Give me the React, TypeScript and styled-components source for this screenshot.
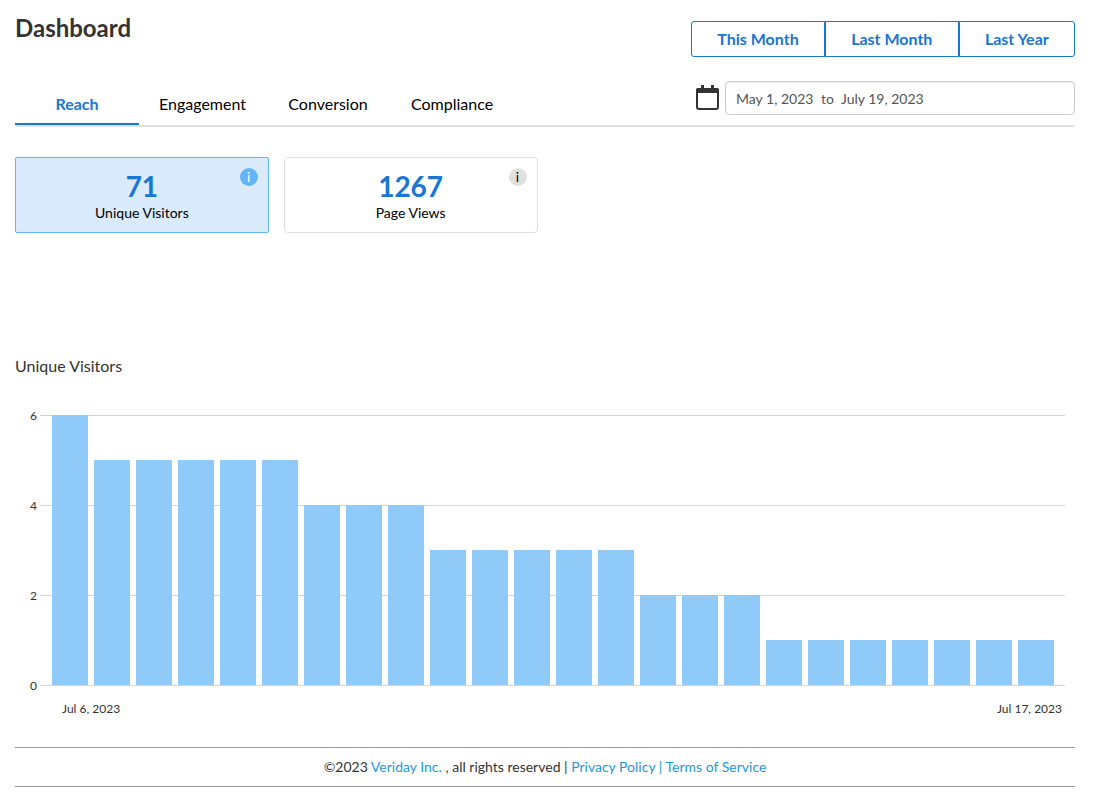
import React, { useState } from "react";
import styled, { createGlobalStyle } from "styled-components";

const GlobalStyle = createGlobalStyle`
  *, *::before, *::after { box-sizing: border-box; }
  body {
    margin: 0;
    background: #fff;
    color: #333;
    font-family: Lato, "Liberation Sans", sans-serif;
    font-size: 14px;
    line-height: 20px;
  }
  button, input { font: inherit; }
`;

const Page = styled.main`
  padding: 0 19px 0 15px;
`;

const Header = styled.header`
  display: flex;
  justify-content: space-between;
  border-bottom: 2px solid #e0e0e0;
`;

const HeaderLeft = styled.div`
  display: flex;
  flex-direction: column;
  justify-content: space-between;
`;

const HeaderRight = styled.div`
  display: flex;
  flex-direction: column;
  gap: 24px;
  padding: 21px 0 10px;
`;

const Title = styled.h1`
  margin: 0;
  padding-top: 12px;
  font-size: 24px;
  line-height: 32px;
  font-weight: 700;
`;

const Tabs = styled.nav`
  display: flex;
`;

const Tab = styled.button<{ $active: boolean }>`
  min-width: 124px;
  height: 41px;
  padding: 0 20px;
  border: 0;
  border-bottom: 2px solid ${(p) => (p.$active ? "#1976d2" : "transparent")};
  background: none;
  color: ${(p) => (p.$active ? "#1976d2" : "#000")};
  font-size: 16px;
  font-weight: ${(p) => (p.$active ? 700 : 400)};
  cursor: pointer;
`;

const RangeButtons = styled.div`
  display: flex;
`;

const RangeButton = styled.button`
  flex: 1 1 auto;
  height: 36px;
  padding: 0 25px;
  border: 1px solid #1976d2;
  background: #fff;
  color: #1976d2;
  font-size: 16px;
  font-weight: 700;
  cursor: pointer;
  &:first-child { border-radius: 3px 0 0 3px; }
  &:last-child { border-radius: 0 3px 3px 0; }
`;

const DateRow = styled.div`
  display: flex;
  align-items: center;
  gap: 5px;
  padding-left: 5px;
`;

const DateBox = styled.div`
  display: flex;
  flex: 0 0 350px;
  align-items: center;
  gap: 7px;
  height: 34px;
  padding: 2px 10px 0;
  border: 1px solid #ccc;
  border-radius: 4px;
  box-shadow: inset 0 1px 1px rgba(0, 0, 0, 0.075);
  color: #555;
`;

const DateInput = styled.input`
  width: 78px;
  padding: 0;
  border: 0;
  outline: 0;
  background: none;
  color: inherit;
  &:last-child { flex: 1; }
`;

const Cards = styled.section`
  display: grid;
  grid-template-columns: repeat(4, 1fr);
  gap: 15px;
  margin-top: 30px;
`;

const Card = styled.button<{ $active: boolean }>`
  position: relative;
  height: 76px;
  padding: 2px 0 0;
  border: 1px solid ${(p) => (p.$active ? "#64b5f6" : "#e0e0e0")};
  border-radius: ${(p) => (p.$active ? 2 : 4)}px;
  background: ${(p) => (p.$active ? "#d9ebfd" : "#fff")};
  color: #000;
  text-align: center;
  cursor: pointer;
`;

const CardValue = styled.span`
  display: block;
  color: #1976d2;
  font-size: 28px;
  line-height: 34px;
  font-weight: 700;
`;

const CardLabel = styled.span`
  display: block;
`;

const InfoBadge = styled.span<{ $active: boolean }>`
  position: absolute;
  top: 10px;
  right: 10px;
  width: 18px;
  height: 18px;
  border-radius: 50%;
  background: ${(p) => (p.$active ? "#64b5f6" : "#e0e0e0")};
  color: ${(p) => (p.$active ? "#fff" : "#000")};
  line-height: 18px;
`;

const ChartTitle = styled.h2`
  margin: 123px 0 0;
  font-size: 16px;
  line-height: 20px;
  font-weight: 400;
`;

const Chart = styled.figure`
  margin: 30px 10px 0 15px;
  font-size: 12px;
`;

const Plot = styled.div`
  display: grid;
  height: 289px;
  > * { grid-area: 1 / 1; }
`;

const Scale = styled.div`
  display: flex;
  flex-direction: column;
  justify-content: space-between;
`;

const ScaleRow = styled.div`
  display: flex;
  align-items: center;
  gap: 3px;
  height: 19px;
  line-height: 18px;
  &::after {
    content: "";
    flex: 1;
    height: 1px;
    background: #d5d5d5;
  }
`;

const Bars = styled.div`
  display: flex;
  align-items: flex-end;
  gap: 6px;
  padding: 9px 11px 10px 22px;
`;

const Bar = styled.div`
  flex: 1;
  background: #90caf9;
`;

const Dates = styled.figcaption`
  display: flex;
  justify-content: space-between;
  padding: 4px 3px 0 32px;
`;

const Footer = styled.footer`
  margin-top: 28px;
  padding: 9px 0;
  border-top: 1px solid #999;
  border-bottom: 1px solid #999;
  text-align: center;
`;

const FooterLink = styled.a`
  color: #1c9ad6;
  text-decoration: none;
`;

const CalendarIcon = () => (
  <svg width="24" height="26" viewBox="0 0 24 26" fill="none" aria-hidden="true">
    <rect x="1" y="4" width="21" height="20" rx="2" stroke="#333" strokeWidth="2" />
    <path d="M0 5a2 2 0 0 1 2-2h19a2 2 0 0 1 2 2v3H0zM5 0h3v4H5zM15 0h3v4h-3z" fill="#333" />
  </svg>
);

const tabs = ["Reach", "Engagement", "Conversion", "Compliance"];
const ranges = ["This Month", "Last Month", "Last Year"];
const metrics = [
  { value: 71, label: "Unique Visitors" },
  { value: 1267, label: "Page Views" },
];
const ticks = [6, 4, 2, 0];
const visitors = [6, 5, 5, 5, 5, 5, 4, 4, 4, 3, 3, 3, 3, 3, 2, 2, 2, 1, 1, 1, 1, 1, 1, 1];

export default function App() {
  const [tab, setTab] = useState("Reach");
  const [metric, setMetric] = useState("Unique Visitors");

  return (
    <Page>
      <GlobalStyle />
      <Header>
        <HeaderLeft>
          <Title>Dashboard</Title>
          <Tabs>
            {tabs.map((name) => (
              <Tab key={name} $active={name === tab} onClick={() => setTab(name)}>
                {name}
              </Tab>
            ))}
          </Tabs>
        </HeaderLeft>
        <HeaderRight>
          <RangeButtons>
            {ranges.map((name) => (
              <RangeButton key={name}>{name}</RangeButton>
            ))}
          </RangeButtons>
          <DateRow>
            <CalendarIcon />
            <DateBox>
              <DateInput id="from" aria-label="From" defaultValue="May 1, 2023" />
              <label htmlFor="until">to</label>
              <DateInput id="until" defaultValue="July 19, 2023" />
            </DateBox>
          </DateRow>
        </HeaderRight>
      </Header>

      <Cards>
        {metrics.map(({ value, label }) => (
          <Card key={label} $active={label === metric} onClick={() => setMetric(label)}>
            <CardValue>{value}</CardValue>
            <CardLabel>{label}</CardLabel>
            <InfoBadge $active={label === metric}>i</InfoBadge>
          </Card>
        ))}
      </Cards>

      <ChartTitle>Unique Visitors</ChartTitle>
      <Chart>
        <Plot>
          <Scale>
            {ticks.map((tick) => (
              <ScaleRow key={tick}>{tick}</ScaleRow>
            ))}
          </Scale>
          <Bars>
            {visitors.map((count, i) => (
              <Bar key={i} style={{ height: `${(count / 6) * 100}%` }} />
            ))}
          </Bars>
        </Plot>
        <Dates>
          <span>Jul 6, 2023</span>
          <span>Jul 17, 2023</span>
        </Dates>
      </Chart>

      <Footer>
        ©2023 <FooterLink href="#veriday">Veriday Inc.</FooterLink> , all rights reserved |{" "}
        <FooterLink href="#privacy">Privacy Policy |</FooterLink>{" "}
        <FooterLink href="#terms">Terms of Service</FooterLink>
      </Footer>
    </Page>
  );
}
